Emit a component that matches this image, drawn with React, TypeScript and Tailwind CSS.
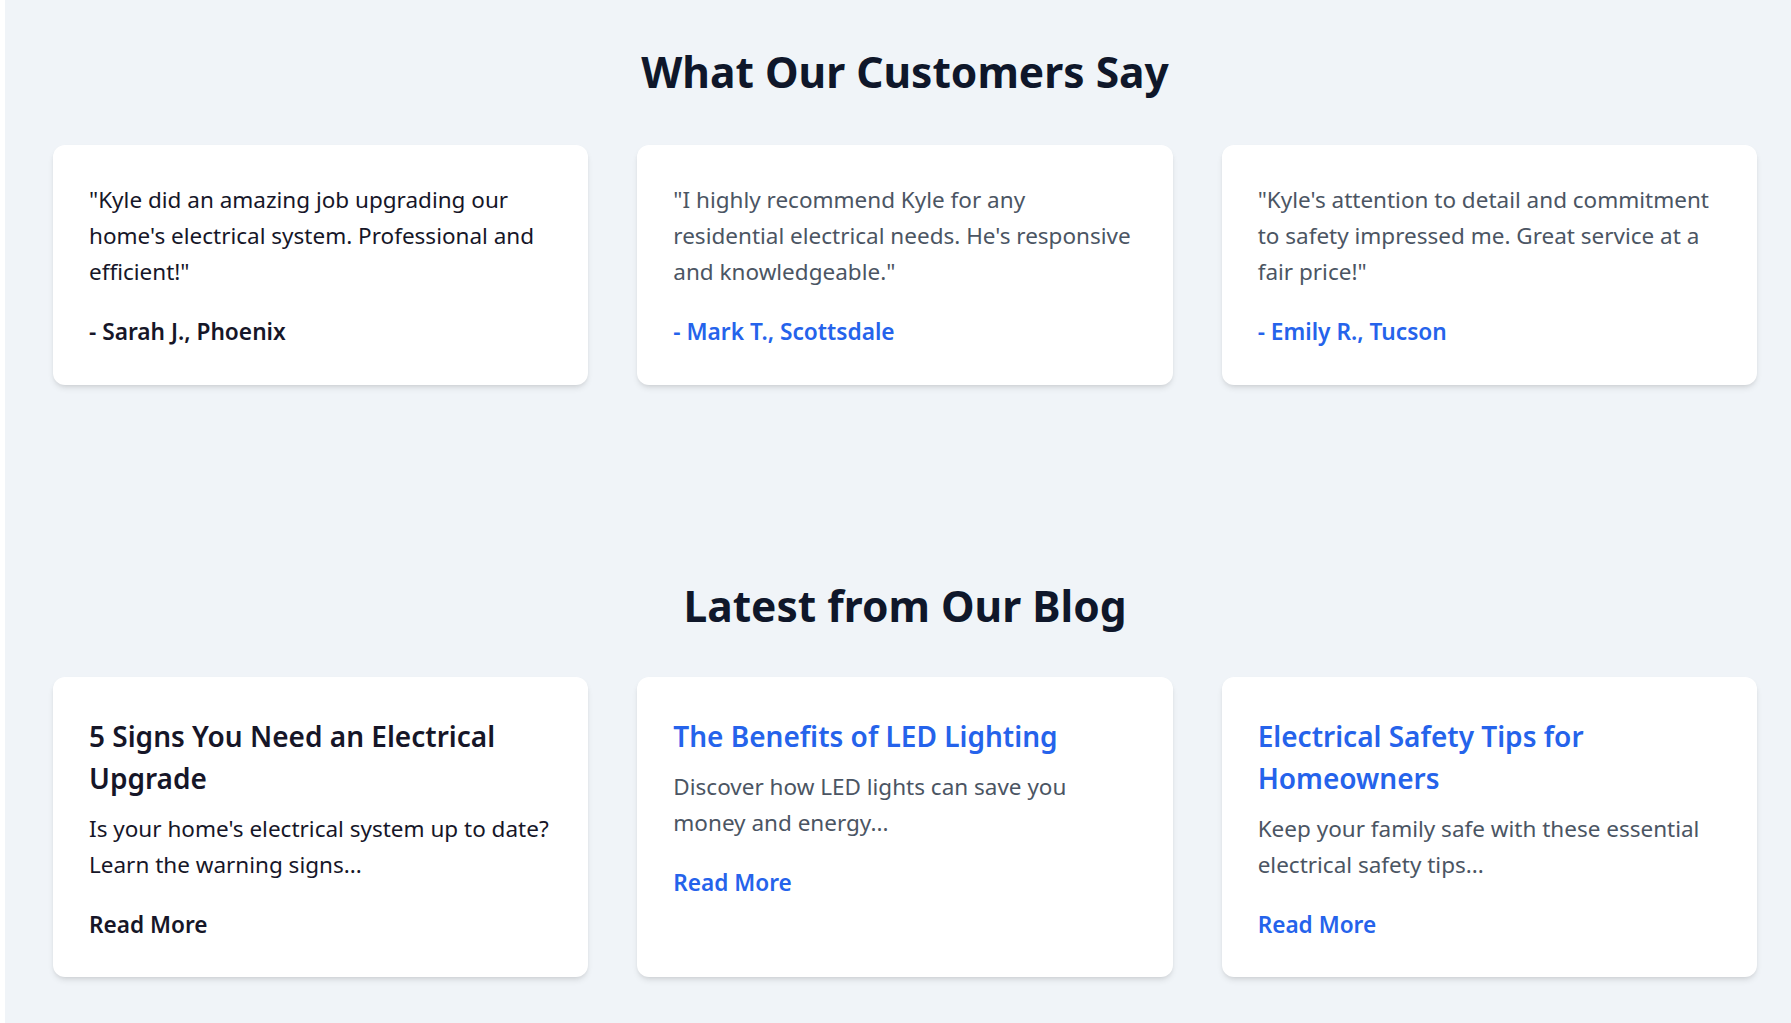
import React from 'react'

interface testimonialType {
    quote: string;
    author: string;
    active?: boolean;
}

interface postType {
    title: string;
    excerpt: string;
    active?: boolean;
}

const testimonials: testimonialType[] = [
    { quote: '"Kyle did an amazing job upgrading our home\'s electrical system. Professional and efficient!"', author: '- Sarah J., Phoenix', active: true },
    { quote: '"I highly recommend Kyle for any residential electrical needs. He\'s responsive and knowledgeable."', author: '- Mark T., Scottsdale' },
    { quote: '"Kyle\'s attention to detail and commitment to safety impressed me. Great service at a fair price!"', author: '- Emily R., Tucson' },
]

const posts: postType[] = [
    { title: '5 Signs You Need an Electrical Upgrade', excerpt: "Is your home's electrical system up to date? Learn the warning signs...", active: true },
    { title: 'The Benefits of LED Lighting', excerpt: 'Discover how LED lights can save you money and energy...' },
    { title: 'Electrical Safety Tips for Homeowners', excerpt: 'Keep your family safe with these essential electrical safety tips...' },
]

const TestimonialCard: React.FC<testimonialType> = ({ quote, author, active }) => {
    return (
        <div className="bg-white rounded-xl shadow-md px-9 pt-[37px] pb-[37px]">
            <p className={`text-[22.5px] leading-[36px] mb-[26px] ${active ? 'text-[#161628]' : 'text-[#4b5563]'}`}>
                {quote}
            </p>
            <p className={`text-[22.7px] leading-[32px] font-semibold ${active ? 'text-[#161628]' : 'text-[#2563eb]'}`}>
                {author}
            </p>
        </div>
    )
}

const PostCard: React.FC<postType> = ({ title, excerpt, active }) => {
    return (
        <div className="bg-white rounded-xl shadow-md px-9 pt-[38px] pb-9">
            <h3 className={`text-[28px] leading-[42px] font-semibold mb-3 ${active ? 'text-[#161628]' : 'text-[#2563eb]'}`}>
                {title}
            </h3>
            <p className={`text-[22.5px] leading-[36px] mb-[26px] ${active ? 'text-[#161628]' : 'text-[#4b5563]'}`}>
                {excerpt}
            </p>
            <a className={`text-[22.6px] leading-[32px] font-semibold ${active ? 'text-[#161628]' : 'text-[#2563eb]'}`}>
                Read More
            </a>
        </div>
    )
}

export default function App() {
    return (
        <div className="min-h-screen bg-white flex" style={{ fontFamily: '"Noto Sans", "Open Sans", sans-serif' }}>
            <div className="w-[5px] shrink-0 bg-white" />
            <main className="flex-1 bg-[#f0f4f8] pl-[48px] pr-[34px] pb-[45px]">
                <section className="pt-12">
                    <h2 className="text-center text-[42.5px] leading-[48px] font-bold text-[#0f172a] mb-[49px]">
                        What Our Customers Say
                    </h2>
                    <div className="grid grid-cols-3 gap-[49px]">
                        {testimonials.map((t) => (
                            <TestimonialCard key={t.author} {...t} />
                        ))}
                    </div>
                </section>

                <section className="pt-[197px]">
                    <h2 className="text-center text-[42.5px] leading-[48px] font-bold text-[#0f172a] mb-[47px]">
                        Latest from Our Blog
                    </h2>
                    <div className="grid grid-cols-3 gap-[49px]">
                        {posts.map((p) => (
                            <PostCard key={p.title} {...p} />
                        ))}
                    </div>
                </section>
            </main>
        </div>
    )
}
